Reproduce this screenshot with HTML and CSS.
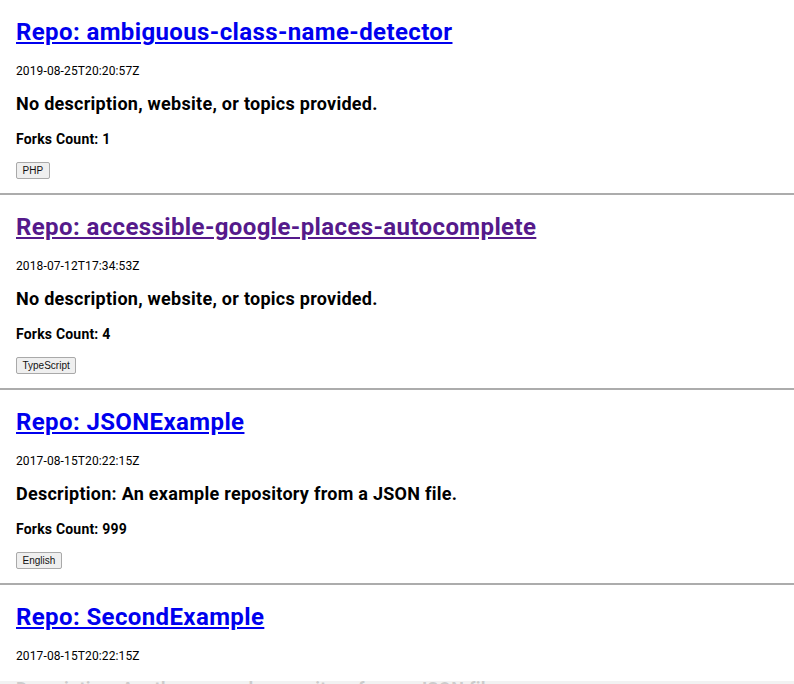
FILE: index.html
```html
<!DOCTYPE html>
<html lang="en">
<head>
<meta charset="utf-8">
<title>Repos</title>
<link rel="stylesheet" href="styles.css">
</head>
<body>
<main class="repos">
  <section class="repo">
    <h2 class="repo-title"><a href="#a1">Repo: ambiguous-class-name-detector</a></h2>
    <p class="repo-date">2019-08-25T20:20:57Z</p>
    <h3 class="repo-desc">No description, website, or topics provided.</h3>
    <h4 class="repo-forks">Forks Count: 1</h4>
    <div class="repo-tags"><button class="tag">PHP</button></div>
  </section>
  <section class="repo">
    <h2 class="repo-title"><a class="visited" href="#a2">Repo: accessible-google-places-autocomplete</a></h2>
    <p class="repo-date">2018-07-12T17:34:53Z</p>
    <h3 class="repo-desc">No description, website, or topics provided.</h3>
    <h4 class="repo-forks">Forks Count: 4</h4>
    <div class="repo-tags"><button class="tag">TypeScript</button></div>
  </section>
  <section class="repo">
    <h2 class="repo-title"><a href="#a3">Repo: JSONExample</a></h2>
    <p class="repo-date">2017-08-15T20:22:15Z</p>
    <h3 class="repo-desc">Description: An example repository from a JSON file.</h3>
    <h4 class="repo-forks">Forks Count: 999</h4>
    <div class="repo-tags"><button class="tag">English</button></div>
  </section>
  <section class="repo">
    <h2 class="repo-title"><a href="#a4">Repo: SecondExample</a></h2>
    <p class="repo-date">2017-08-15T20:22:15Z</p>
    <h3 class="repo-desc">Description: Another example repository from a JSON file.</h3>
    <h4 class="repo-forks">Forks Count: 12</h4>
    <div class="repo-tags"><button class="tag">English</button></div>
  </section>
</main>
<div class="bottom-fade"></div>
</body>
</html>
```

FILE: styles.css
```css
html, body {
  margin: 0;
  padding: 0;
  background: #ffffff;
}

body {
  font-family: Roboto, "Liberation Sans", Arial, sans-serif;
  color: #000000;
}

.repo {
  display: flow-root;
  padding: 0 16px;
  border-bottom: 2px solid #acacac;
}

.repo-title {
  margin: 18px 0 0;
  font-size: 24px;
  line-height: 28px;
  font-weight: 700;
  letter-spacing: 0.016em;
}

.repo-title a {
  color: #0000ee;
  text-decoration: underline;
}

.repo-title a.visited {
  color: #551a8b;
}

.repo-date {
  margin: 18px 0 0;
  font-size: 12px;
  line-height: 14px;
  font-weight: 400;
  letter-spacing: 0.01em;
}

.repo-desc {
  margin: 15px 0 0;
  font-size: 18px;
  line-height: 21px;
  font-weight: 700;
  letter-spacing: 0.015em;
}

.repo-forks {
  margin: 17px 0 0;
  font-size: 14px;
  line-height: 16px;
  font-weight: 700;
  letter-spacing: 0.014em;
}

.repo-tags {
  margin: 15px 0 14px;
  height: 17px;
  display: flex;
}

.tag {
  font-family: "Liberation Sans", Arial, sans-serif;
  font-size: 10px;
  line-height: 13px;
  height: 17px;
  padding: 1px 5.5px;
  margin: 0;
  border: 1px solid #a9a9a9;
  border-radius: 2px;
  background: #efefef;
  color: #111111;
}

.bottom-fade {
  position: fixed;
  left: 0;
  right: 0;
  bottom: 0;
  height: 3px;
  background: rgba(240, 240, 240, 0.85);
}
```
